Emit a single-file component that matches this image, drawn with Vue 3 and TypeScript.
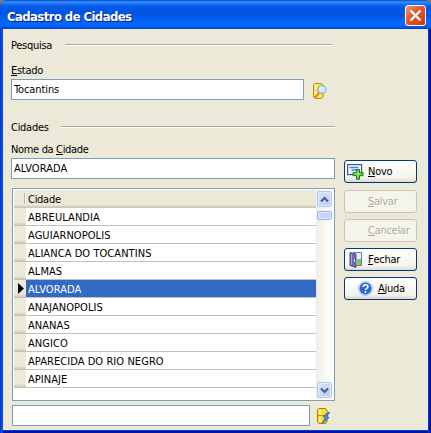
<script setup lang="ts">
import { ref } from 'vue'

const estado = ref('Tocantins')
const busca = ref('')
const selected = ref('ALVORADA')
const cities: string[] = [
  'ABREULANDIA',
  'AGUIARNOPOLIS',
  'ALIANCA DO TOCANTINS',
  'ALMAS',
  'ALVORADA',
  'ANAJANOPOLIS',
  'ANANAS',
  'ANGICO',
  'APARECIDA DO RIO NEGRO',
  'APINAJE',
]
</script>

<template>
  <div class="window">
    <header class="titlebar">
      <h1>Cadastro de Cidades</h1>
      <button class="close" aria-label="Fechar janela">
        <svg width="21" height="21" viewBox="0 0 21 21">
          <defs>
            <linearGradient id="red" x1="0" y1="0" x2="1" y2="1">
              <stop offset="0" stop-color="#f0a088" />
              <stop offset=".35" stop-color="#e2603c" />
              <stop offset=".75" stop-color="#dc4418" />
              <stop offset="1" stop-color="#b83008" />
            </linearGradient>
          </defs>
          <rect x=".5" y=".5" width="20" height="20" rx="2.5" fill="url(#red)" stroke="#fff" />
          <path d="M5.500 5.500l10 10M15.500 5.500l-10 10" stroke="#fff" stroke-width="2.200" />
        </svg>
      </button>
    </header>

    <main class="client">
      <section class="form">
        <div class="group first"><span>Pesquisa</span><i></i></div>
        <label class="lbl estado"><u>E</u>stado</label>
        <div class="line">
          <input v-model="estado" class="field w-estado" />
          <svg class="db-search" width="14" height="16" viewBox="0 0 14 16">
            <path d="M2 .5h6l2 1.500v12l-2 1.500H2L.5 14V2z" fill="#ffe343" stroke="#b98a12" />
            <path d="M2 2h2v12H2z" fill="#fff8a8" />
            <path d="M5 4v8M2 7.500h3" stroke="#e8bc30" />
            <path d="M6 10l-4 4.500" stroke="#e08030" stroke-width="2" />
            <circle cx="9" cy="6.500" r="4" fill="#c9efff" stroke="#8a9fd0" />
            <path d="M7 6.500q0-2 2-2" stroke="#fff" fill="none" />
          </svg>
        </div>
        <div class="group second"><span>Cidades</span><i></i></div>
        <label class="lbl nome">Nome da <u>C</u>idade</label>
        <input v-model="selected" class="field caps w-nome" />

        <div class="grid">
          <div class="rows">
            <div class="head"><b></b><span>Cidade</span></div>
            <div
              v-for="c in cities"
              :key="c"
              class="row caps"
              :class="{ on: c === selected }"
              @click="selected = c"
            >
              <b>
                <svg v-if="c === selected" width="6" height="11" viewBox="0 0 6 11">
                  <path d="M0 0L6 5.500L0 11z" fill="#000" />
                </svg>
              </b>
              <span>{{ c }}</span>
            </div>
          </div>
          <div class="scroll">
            <div class="arrow">
              <svg width="9" height="7" viewBox="0 0 9 7">
                <path d="M1 5.500L4.500 2L8 5.500" fill="none" stroke="#4d6185" stroke-width="2.200" />
              </svg>
            </div>
            <div class="thumb"></div>
            <div class="arrow down">
              <svg width="9" height="7" viewBox="0 0 9 7">
                <path d="M1 1.500L4.500 5L8 1.500" fill="none" stroke="#4d6185" stroke-width="2.200" />
              </svg>
            </div>
          </div>
        </div>

        <div class="line last">
          <input v-model="busca" class="field w-busca" />
          <svg class="db-flash" width="14" height="16" viewBox="0 0 14 16">
            <path d="M2 .5h6l2 1.500v12l-2 1.500H2L.5 14V2z" fill="#ffdc28" stroke="#a87a10" />
            <path d="M2 2h2v4H2zM2 9h2v5H2z" fill="#fffa9a" />
            <path d="M1 7.500h8" stroke="#c89614" />
            <path d="M12.500 4L6 8.500l2.500 1L5.500 15l6.500-5.500-2-1z" fill="#3aa0f0" stroke="#1450b0" stroke-width=".8" />
          </svg>
        </div>
      </section>

      <aside class="actions">
        <button class="btn novo">
          <svg width="17" height="17" viewBox="0 0 17 17">
            <rect x=".6" y="1.600" width="14" height="10" fill="#f4f8ff" stroke="#54548c" stroke-width="1.200" />
            <path d="M2.500 4.500h9M4.500 7h6" stroke="#2c8ce8" stroke-width="1.300" />
            <path d="M9.500 6.500h3v3.200h3.500v3h-3.500v3.500h-3v-3.500H6v-3h3.500z" fill="#62d038" stroke="#1c7410" />
            <path d="M11 8v6M7.500 11h6" stroke="#a8f080" />
          </svg>
          <span><u>N</u>ovo</span>
        </button>
        <button class="btn off salvar" disabled><span><u>S</u>alvar</span></button>
        <button class="btn off cancelar" disabled><span><u>C</u>ancelar</span></button>
        <button class="btn fechar">
          <svg width="14" height="17" viewBox="0 0 14 17">
            <path d="M4.500 1.500h8v13h-8z" fill="#fff" stroke="#7471b5" />
            <path d="M8 8h4v6H8z" fill="#72d044" />
            <path d="M8 3h4v5H8z" fill="#e3f2ff" />
            <path d="M1 1.500l6 1.500v13.500L1 14.500z" fill="#6e6bb0" stroke="#504d92" />
            <path d="M2.500 3v10.500" stroke="#a9a7dc" />
            <path d="M5.500 8.500v2" stroke="#fff" />
          </svg>
          <span><u>F</u>echar</span>
        </button>
        <button class="btn ajuda">
          <svg width="15" height="15" viewBox="0 0 15 15">
            <circle cx="7.500" cy="7.500" r="7" fill="#dbe7fa" stroke="#a9c2ee" />
            <circle cx="7.500" cy="7.500" r="6" fill="#2b6bd2" />
            <path d="M5.200 6q0-2.200 2.400-2.200t2.300 1.900q0 1-1.200 1.700t-1.100 1.500" fill="none" stroke="#fff" stroke-width="1.600" />
            <circle cx="7.500" cy="11" r="1" fill="#fff" />
          </svg>
          <span><u>A</u>juda</span>
        </button>
      </aside>
    </main>
  </div>
</template>

<style>
body {
  margin: 0;
  background: #7b7b78;
}
</style>

<style scoped>
.window {
  box-sizing: border-box;
  width: 431px;
  height: 433px;
  display: flex;
  flex-direction: column;
  overflow: hidden;
  border-radius: 7px 7px 0 0;
  background: linear-gradient(90deg, #0024c4, #0a5cf4 2px, #0048e0 3px, #0040d8 428px, #0020b8 429px, #00108c);
  font: 11px/13px "DejaVu Sans Condensed", "DejaVu Sans", sans-serif;
  font-stretch: condensed;
  letter-spacing: -0.28px;
  color: #000;
}
.titlebar {
  flex: none;
  box-sizing: border-box;
  height: 29px;
  padding: 5px 5px 0 7px;
  display: flex;
  justify-content: space-between;
  background: linear-gradient(#0648c8, #3a90ff 2px, #1470f8 4px, #0358e4 7px, #0054e2 14px, #0464fa 21px, #0468ff 25px, #0050d8 28px, #003cc0);
}
h1 {
  margin: 4px 0 0;
  font: bold 13px/15px "DejaVu Sans Condensed", "DejaVu Sans", sans-serif;
  font-stretch: condensed;
  letter-spacing: -0.59px;
  color: #fff;
  text-shadow: 1px 1px #0a1883;
}
button {
  font: inherit;
  letter-spacing: inherit;
  color: inherit;
}
.close {
  width: 21px;
  height: 21px;
  padding: 0;
  border: 0;
  background: none;
}
svg {
  display: block;
  flex: none;
}
.client {
  flex: 1;
  margin: 0 3px 3px;
  display: flex;
  background: #ece9d8;
  box-shadow: 0 1px #0040d8, 0 3px #00149c;
}
.form {
  width: 332px;
  flex: none;
  display: flex;
  flex-direction: column;
  padding-left: 8px;
  box-sizing: border-box;
}
.group {
  display: flex;
  align-items: center;
  height: 13px;
}
.group span {
  padding-top: 2px;
}
.group i {
  flex: 1;
  height: 1px;
  background: #aca899;
  border-bottom: 1px solid #fff;
}
.first {
  margin-top: 9px;
}
.first span {
  width: 54px;
}
.first i {
  margin-right: 3px;
}
.second {
  margin-top: 20px;
}
.second span {
  width: 50px;
}
.lbl {
  height: 13px;
}
.estado {
  margin: 13px 0 2px;
}
.nome {
  margin: 10px 0 2px;
  letter-spacing: -0.34px;
}
u {
  text-decoration: none;
  display: inline-block;
  height: 12px;
  line-height: 13px;
  box-shadow: inset 0 -1px currentColor;
}
.line {
  display: flex;
}
.field {
  box-sizing: border-box;
  height: 21px;
  border: 1px solid #7f9db9;
  border-radius: 0;
  padding: 0 2px 1px;
  margin: 0;
  outline: 0;
  background: #fff;
  font: inherit;
  letter-spacing: -0.1px;
  color: #000;
}
.caps {
  letter-spacing: 0.06px;
}
.w-estado {
  width: 293px;
}
.w-nome {
  width: 324px;
}
.w-busca {
  width: 298px;
}
.db-search {
  margin: 4px 0 0 9px;
}
.db-flash {
  margin: 3px 0 0 7px;
}
.grid {
  box-sizing: border-box;
  height: 213px;
  margin: 9px 0 4px 1px;
  border: 1px solid #7f9db9;
  padding: 1px;
  display: flex;
  background: #fff;
}
.last {
  margin-left: 1px;
}
.rows {
  flex: 1;
}
.head,
.row {
  height: 18px;
  display: flex;
  box-sizing: border-box;
}
.head {
  background: linear-gradient(#ece9d8 15px, #dcd8c6 16px, #c6c2ae);
}
.head b {
  width: 10px;
  height: 11px;
  margin: 3px 1px 0 0;
  border-right: 1px solid #bdb9a6;
  box-shadow: 1px 0 #fff;
}
.head span {
  padding: 3px 0 0 2px;
}
.row b {
  width: 12px;
  height: 18px;
  display: flex;
  align-items: center;
  justify-content: center;
  background: linear-gradient(#ece9d8 14px, #d8d4c2 16px, #c2beac);
}
.row b svg {
  margin: 0 0 1px 1px;
}
.row span {
  flex: 1;
  padding: 3px 0 0 2px;
  box-sizing: border-box;
  border-bottom: 1px solid #c0c0c0;
}
.row.on span {
  background: #316ac5;
  color: #fff;
}
.scroll {
  width: 17px;
  display: flex;
  flex-direction: column;
  background: linear-gradient(90deg, #eeede5, #fefefb 15px);
}
.arrow {
  width: 15px;
  height: 16px;
  box-sizing: border-box;
  margin: 1px 1px 0;
  border: 1px solid #b4c8f0;
  border-radius: 2px;
  box-shadow: inset 0 0 0 1px #dfe9ff;
  display: flex;
  align-items: center;
  justify-content: center;
  background: linear-gradient(135deg, #d8e4ff, #b8ccfa);
}
.arrow.down {
  margin: auto 1px 1px;
}
.thumb {
  height: 9px;
  width: 15px;
  box-sizing: border-box;
  margin: 4px 1px 0;
  border: 1px solid #98b4e8;
  border-radius: 2px;
  background: #c6d5fd;
  box-shadow: inset 0 0 0 1px #dfe9ff;
}
.actions {
  padding: 131px 0 0 9px;
  display: flex;
  flex-direction: column;
  gap: 6px;
}
.btn {
  box-sizing: border-box;
  width: 73px;
  height: 23px;
  border: 1px solid #003c74;
  border-radius: 3px;
  padding: 0;
  display: flex;
  align-items: center;
  background: linear-gradient(#fff, #f4f3ee 80%, #dcd8cc);
}
.novo {
  margin-bottom: 1px;
}
.novo svg {
  margin: 0 4px 0 2px;
}
.salvar,
.cancelar {
  padding-left: 23px;
}
.fechar svg {
  margin: 0 5px 0 4px;
}
.ajuda svg {
  margin: 0 5px 0 13px;
}
.off {
  border-color: #c9c7ba;
  background: #f5f4ea;
  color: #aca899;
  text-shadow: 1px 1px #fff;
}
</style>
